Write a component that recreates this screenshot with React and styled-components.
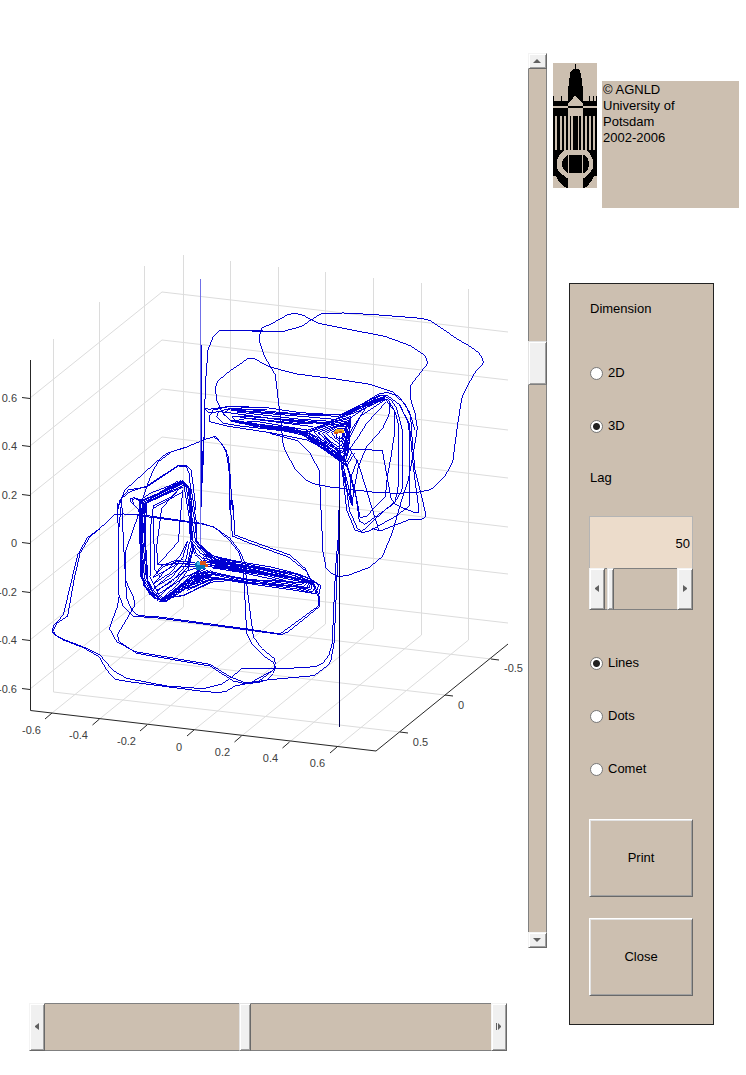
import React, { useState } from "react";
import styled, { createGlobalStyle, css } from "styled-components";

const clay = "#ccbfb0";

const GlobalStyle = createGlobalStyle`
  *, *::before, *::after { box-sizing: border-box; }
  body {
    margin: 0;
    background: #fff;
    color: #000;
    font-family: "Liberation Sans", Arial, sans-serif;
    font-size: 13px;
    line-height: 16px;
  }
`;

const Page = styled.main`
  display: flex;
  align-items: flex-start;
  padding: 53px 7px 24px 0;
`;

const Viewer = styled.section`
  flex: 1;
  min-width: 0;
  margin-right: 6px;
`;

const Stage = styled.div`
  display: flex;
`;

const PlotArea = styled.div`
  flex: 1;
  min-width: 0;
  padding: 187px 0 168px;
`;

const Plot = styled.svg`
  display: block;
  width: 100%;
  height: auto;
  overflow: visible;
  font-size: 11px;
`;

const Sidebar = styled.aside`
  flex: none;
  width: 186px;
  padding-top: 10px;
`;

/* Scroll bars */

const raised = css`
  border: 1px solid;
  border-color: #f4f4f4 #696969 #696969 #f4f4f4;
  box-shadow: inset 1px 1px #fff, inset -1px -1px #a0a0a0;
  background: #f0f0f0;
`;

const thumb = css`
  appearance: none;
  border-radius: 0;
  ${raised}
  border-color: #e3e3e3 #696969 #808080 #e3e3e3;
  width: ${(p) => (p.$vertical ? "19px" : `${p.$thumb}px`)};
  height: ${(p) => (p.$vertical ? `${p.$thumb}px` : "100%")};
`;

const Bar = styled.div`
  display: flex;
  flex-direction: ${(p) => (p.$vertical ? "column" : "row")};
  background: ${clay};
  ${(p) => p.$vertical && "width: 19px;"}
`;

const BottomBar = styled.div`
  margin: 55px 40px 0 29px;
`;

const Range = styled.input`
  appearance: none;
  display: block;
  flex: 1;
  min-width: 0;
  min-height: 0;
  margin: 0;
  background: ${clay};
  ${(p) =>
    p.$vertical
      ? "writing-mode: vertical-lr; width: 19px; box-shadow: inset 1px 0 #808080, inset -1px 0 #808080;"
      : `height: ${p.$size}px; box-shadow: inset 0 1px #808080, inset 0 -1px #808080;`}

  &::-webkit-slider-runnable-track { ${(p) => (p.$vertical ? "width: 100%;" : "height: 100%;")} }
  &::-webkit-slider-thumb { ${thumb} }
`;

const ArrowButton = styled.button`
  ${raised}
  flex: none;
  display: flex;
  align-items: center;
  justify-content: center;
  padding: 0;
  width: ${(p) => (p.$vertical ? "19px" : "16px")};
  height: ${(p) => (p.$vertical ? "16px" : "auto")};
`;

const arrows = {
  up: "M0 7L4 3L8 7Z",
  down: "M0 3H8L4 7Z",
  left: "M7 1V8L3 5V4Z",
  right: "M3 1V8L7 5V4Z",
  end: "M2 1H3V8H2ZM4 1L7 4V5L4 8Z",
};

function Arrow({ kind }) {
  return (
    <svg width="10" height="10" viewBox="0 0 10 10" aria-hidden="true">
      <path d={arrows[kind]} fill="#606060" />
    </svg>
  );
}

function ScrollBar({ label, vertical, size, thumbSize, initial, first, last }) {
  const [value, setValue] = useState(initial);
  const step = (d) => setValue((v) => Math.min(1000, Math.max(0, v + d)));
  return (
    <Bar $vertical={vertical}>
      <ArrowButton type="button" $vertical={vertical} aria-label={`${label} decrease`} onClick={() => step(-10)}>
        <Arrow kind={first} />
      </ArrowButton>
      <Range
        type="range"
        min="0"
        max="1000"
        aria-label={label}
        value={value}
        onChange={(e) => setValue(Number(e.target.value))}
        $vertical={vertical}
        $size={size}
        $thumb={thumbSize}
      />
      <ArrowButton type="button" $vertical={vertical} aria-label={`${label} increase`} onClick={() => step(10)}>
        <Arrow kind={last} />
      </ArrowButton>
    </Bar>
  );
}

/* Credits */

const Credits = styled.header`
  display: flex;
  align-items: flex-start;
  gap: 5px;
  margin-bottom: 75px;
`;

const Logo = styled.svg`
  flex: none;
  width: 44px;
  height: 125px;
  background: ${clay};
`;

const Notice = styled.p`
  flex: 1;
  min-height: 127px;
  margin: 18px 0 0;
  padding: 1px 60px 0 1px;
  background: ${clay};
`;

function TowerLogo() {
  return (
    <Logo viewBox="99 69 132 375" shapeRendering="crispEdges" role="img" aria-label="University of Potsdam tower">
      <path d="M165 72H168V87H174L180 93L183 102L186 126L189 150V183H231V198H99V183H144V150L147 126L150 102L153 93L159 87H165Z" />
      <path d="M99 168H102V183H99ZM123 168H126V183H123ZM207 168H210V183H207ZM219 168H222V183H219ZM228 168H231V183H228Z" />
      <path d="M166 166L189 192V198H144V192Z" fill={clay} />
      <path d="M144 198H189V204H144ZM99 204H144V228H99ZM189 204H231V228H189Z" />
      <path d="M99 228H105V330H99ZM111 228H120V330H111ZM126 228H132V330H126ZM138 228H143V330H138ZM150 228H153V330H150ZM159 228H174V330H159ZM177 228H183V330H177ZM189 228H195V330H189ZM201 228H207V330H201ZM213 228H219V330H213ZM225 228H231V330H225Z" />
      <path d="M99 330H231V408H99Z" />
      <path d="M135 330H198L210 342L219 360V384L210 399L195 411H138L120 399L111 384V360L120 342Z" fill={clay} />
      <path d="M141 345H192L204 357L208 372L204 387L192 399H141L129 387L125 372L129 357Z" />
      <path d="M144 345H147V399H144ZM186 345H189V399H186Z" fill={clay} />
      <path d="M108 408H132L144 416V444L132 441L114 420ZM222 408H201L189 416V444L201 441L216 420Z" />
      <path d="M144 399H189V444H144Z" fill={clay} />
    </Logo>
  );
}

/* Control panel */

const Panel = styled.form`
  display: flex;
  flex-direction: column;
  width: 145px;
  margin-left: 16px;
  padding: 17px 20px 28px 19px;
  background: ${clay};
  border: 1px solid #222;
`;

const Group = styled.fieldset`
  display: flex;
  flex-direction: column;
  gap: 37px;
  min-width: 0;
  margin: 0;
  padding: 0;
  border: 0;
`;

const Legend = styled.legend`
  padding: 0 0 48px 1px;
`;

const RadioLabel = styled.label`
  display: flex;
  align-items: center;
  gap: 5px;
  padding-left: 1px;
`;

const Radio = styled.input`
  appearance: none;
  width: 13px;
  height: 13px;
  margin: 0;
  border: 1px solid #777;
  border-radius: 50%;
  background: #fff;

  &:checked {
    background: radial-gradient(circle, #222 3px, #fff 4px);
  }
`;

const LagBlock = styled.div`
  display: flex;
  flex-direction: column;
  margin: 36px 0 45px;
`;

const LagLabel = styled.label`
  padding: 0 0 30px 1px;
`;

const LagInput = styled.input`
  width: 100%;
  height: 52px;
  padding: 2px 2px 0;
  border: 1px solid #b4b4b4;
  border-bottom: 0;
  background: #ecdccb;
  font: inherit;
  text-align: right;
`;

const Actions = styled.div`
  display: flex;
  flex-direction: column;
  gap: 21px;
  margin-top: 42px;
`;

const PushButton = styled.button`
  height: 78px;
  padding: 0;
  border: 1px solid;
  border-color: #fff #696969 #696969 #fff;
  box-shadow: inset 1px 1px #e3e3e3, inset -1px -1px #a0a0a0;
  background: ${clay};
  color: #000;
  font: inherit;
`;

function RadioGroup({ name, legend, options, initial }) {
  const [value, setValue] = useState(initial);
  return (
    <Group aria-label={legend ? undefined : name}>
      {legend && <Legend>{legend}</Legend>}
      {options.map((option) => (
        <RadioLabel key={option}>
          <Radio type="radio" name={name} checked={value === option} onChange={() => setValue(option)} />
          {option}
        </RadioLabel>
      ))}
    </Group>
  );
}

/* Phase space plot */

const zLevels = [
  [398, 292, 332, "0.6"],
  [446, 340, 380, "0.4"],
  [495, 389, 430, "0.2"],
  [543, 437, 478, "0"],
  [592, 486, 527, "-0.2"],
  [640, 534, 574, "-0.4"],
  [689, 583, 623, "-0.6"],
];

// wall x, wall top, wall bottom, axis x, axis y, label, label centre, baseline
const xLines = [
  [183.5, 255, 607, 52, 713, "-0.6", 31.5, 734],
  [230.5, 261, 613, 99.5, 719, "-0.4", 78.5, 739],
  [278.5, 267, 617, 147, 725, "-0.2", 126.5, 745],
  [325.5, 272, 624, 194, 730, "0", 179, 751],
  [373.5, 278, 629, 241.5, 736, "0.2", 222.5, 756],
  [421.5, 283, 635, 289.5, 742, "0.4", 270.5, 762],
  [468.5, 289, 640, 337, 747, "0.6", 317.5, 767],
];

const yLines = [
  [53.5, 339, 692, 400, 732, "0.5", 420.5, 746],
  [99.5, 302, 655, 445, 695, "0", 461, 709],
  [144.5, 266, 618, 491, 659, "-0.5", 513.5, 672],
];

// A sheaf of n curves blended from polyline a to polyline b, each one
// swaying a little so that neighbours cross as real orbits do.
function sheaf(a, b, n, sway = 0, close = "") {
  const from = a.split(" ").map(Number);
  const to = b.split(" ").map(Number);
  let d = "";
  for (let i = 0; i < n; i += 1) {
    const t = i / (n - 1);
    const points = from.map((v, k) => Math.round(v + (to[k] - v) * t + sway * Math.sin(i * 5 + k * 2.3)));
    d += `M${points.join(" ")}${close}`;
  }
  return d;
}

// Orbits are drawn in thirds of a unit from the origin of each patch.
const patches = [
  {
    x: 0,
    y: 240,
    paths: [
      "M604 715L607 655L612 600L614 500L618 410L624 330L640 290L660 271L850 274",
      "M606 730L611 640L614 500",
      "M665 515L650 480L646 445L652 425L680 400L745 355L762 355L792 372L810 381L890 402L1000 416L1105 432L1180 456",
      "M665 515L690 540L760 558",
      "M697 810L690 700L685 650L665 610L645 589L610 600L555 623L500 640L470 665L375 750L355 800",
      "M690 810L687 690L678 630L655 600L640 590",
      "M440 740L460 690L475 665L515 635L555 622",
      "M415 815L440 740",
      "M355 800L365 775L390 755L440 738L535 676L560 678L573 690L580 740L588 810",
      "M353 810L360 780L385 750L440 741L535 678L558 679L568 700L572 760L576 810",
      "M613 503L625 508L690 499L800 503L900 518L1020 525L1140 465",
      "M613 503L625 518L660 515L700 520L850 540L960 550L1010 555",
      "M690 499L640 510L627 530L630 545L680 558L810 578L920 600L1000 640L1040 680",
      "M760 503L690 505L655 515L650 530L670 550L720 558L900 578L1000 620L1035 665",
      "M800 510L690 507L668 520L690 540L760 558L920 582L1010 640",
      "M950 545L720 528L695 530L712 548L800 563L930 580L1020 650",
      "M940 560L740 535L712 541L760 556L920 575",
      "M920 570L780 546L742 546L800 560L930 580",
      sheaf("690 502 900 520 1020 527 1080 495 1150 468", "720 530 900 550 980 550 1060 520 1155 475", 6, 3),
      sheaf("730 545 890 568 930 585 975 620 1030 655", "690 545 880 574 920 588 970 625 1038 680", 5, 4),
      sheaf("900 578 990 547 1052 532 1046 600 1036 672 960 620", "1008 578 1018 568 1030 568 1030 584 1022 598 1010 592", 9, 2, "Z"),
      sheaf("920 590 1000 640 1040 680 1060 640", "960 580 1000 610 1030 640 1045 600", 5, 5),
    ],
  },
  {
    x: 250,
    y: 240,
    paths: [
      "M0 273L100 274L155 259L183 240L215 220L280 219L360 223L515 235L540 242L580 268L620 296L660 319L687 339L697 355L700 369L675 398L650 442L635 475L622 560L608 667L585 708L550 743L535 751L500 757L440 760L375 757L240 741L190 731L167 719L135 686L115 650L100 618L92 540L76 405L42 346L28 303L28 288L35 265L70 248L115 223L138 220L160 226L205 250L300 269L405 289L480 317L525 347L534 369L481 437L481 475L495 520L502 565L490 640L475 720L452 790L428 875L397 950L358 982L295 1006L265 1010L242 998L228 983L219 935L213 810L208 692L180 640L145 603L60 580",
      "M285 610L310 560L350 500L405 470",
      "M290 640L325 590L350 550L400 495L410 485",
      "M285 570L300 535L390 475",
      "M295 625L300 590L330 530L405 480",
    ],
  },
  {
    x: 280,
    y: 380,
    paths: [
      "M190 105L300 40L325 38L345 45L375 72L392 110L398 200L405 270L420 330L437 400L435 412L425 418L385 420L300 453L275 445",
      "M340 36L365 60L388 95L405 150",
      "M190 108L300 48L320 45L360 75L385 130L390 180L388 378L345 410L270 452L248 458L225 450L200 390L190 300L183 245",
      "M200 105L318 50L335 62L350 85L368 155L366 330L343 370L255 433L238 423L228 350L210 290L195 240",
      "M300 55L325 60L345 95L357 140L354 325L345 365L315 390L245 455L232 445L208 390L190 250",
      "M310 50L345 95L345 150L333 230L322 290L316 350L258 410L240 412L225 330L200 250",
      "M210 208L307 211L333 355L345 372L370 385L405 398L415 398L416 385L400 260L388 130L358 75",
      "M328 70L327 105L308 145L260 200L235 260L220 340L217 378L205 320L190 260",
      "M190 200L210 208L235 250L297 453",
      "M185 250L195 310L215 375L210 300L232 240",
    ],
  },
  {
    x: 0,
    y: 500,
    paths: [
      "M1017 60L1014 120L1007 200L1000 350L997 430L987 465L970 488L948 500L850 506L727 505L690 535L665 552L610 566L500 558L380 535L340 512L300 465L265 447L230 433L190 418L170 407L160 395",
      "M1017 30L1017 100L1012 205L1006 350L1002 430L993 480L985 495L942 527L800 540L740 551L705 558L680 573L655 578L600 573L500 560L400 547L345 538L320 510L297 470L250 443L190 420L165 405L157 393",
      "M157 400L157 388L162 375L190 345L215 240L233 165L262 113L300 85L345 43L370 42L420 44L605 70L645 83L690 123L715 155L728 190L733 260L740 400L755 430L790 467L820 487L826 500L820 520L800 540L750 551",
      "M160 393L170 370L203 348L222 240L240 160L270 110L300 86",
      "M410 46L605 72L640 80L690 115L720 155L735 190L742 270L760 410L785 445L822 475L826 490L820 510L750 549",
      "M352 10L355 100L357 285L370 320L400 350L460 352L750 391L845 404L865 395L958 320L960 300L955 280L915 205L870 165L750 122L705 105L698 0",
      "M365 0L370 120L380 295L395 330L415 347L470 350L750 388L840 402L955 318L955 290L920 215L865 171L750 130L697 108L690 0",
      "M358 285L352 320L328 385L350 425L405 455L630 493L690 530L735 548L775 545L820 510",
      "M415 45L378 150L376 240L400 290L405 315L352 405L358 425L410 460L630 498L700 543L735 551L790 545",
      "M352 20L365 0M365 0L357 80L357 285",
      sheaf("600 130 640 165 700 185 810 202 900 220 940 240 960 260 955 283 900 270 750 252 640 238 560 270", "615 195 660 200 740 210 810 222 870 235 895 242 905 245 895 250 850 245 750 238 640 215 590 225", 9, 3),
      sheaf("585 120 640 180 760 203 870 225 950 245", "640 205 720 220 800 232 870 246 935 248", 8, 3),
      "M700 238L640 240L555 285L510 293L485 300",
      "M720 240L640 245L540 290L510 290",
    ],
  },
  {
    x: 100,
    y: 430,
    paths: [
      "M118 215L105 203L93 205L93 215L118 240L130 230L125 212Z",
      "M118 240L100 222L98 208L112 205L132 220",
      "M235 180L185 235L170 350L173 405L235 335L248 180",
      "M173 405L250 400L290 405M160 440L190 410L250 388",
      "M240 155L150 190L118 212L120 320L130 465L150 490",
      "M235 152L175 190L138 218L128 320",
      "M250 185L158 236L165 420L180 440",
      "M118 240L122 440L150 495",
      "M245 170L215 200L160 228L152 290L150 440L180 500",
      sheaf("245 152 175 190 122 214 120 300 126 440 150 492 185 516 240 480 300 440 345 430", "248 170 190 196 138 222 134 330 145 450 165 485 190 506 235 470 280 430 310 412", 6, 2),
      sheaf("240 150 255 165 266 260 268 330 285 370 330 410 420 425", "248 158 274 180 286 280 292 335 330 370 370 395 420 395", 7, 3),
      sheaf("262 330 245 375 205 420 155 445", "282 345 270 415 230 470 180 508", 6, 4),
      sheaf("285 395 230 390 185 410 155 445", "300 430 260 450 215 490 185 512", 6, 4),
      sheaf("130 460 165 504 190 510 260 460 320 425", "145 480 175 514 200 512 270 470 330 440", 4, 2),
    ],
  },
];

function PhasePlot() {
  return (
    <Plot viewBox="0 240 528 540" role="img" aria-label="Three-dimensional phase space plot">
      <g fill="none" stroke="#dcdcdc">
        {zLevels.map(([a, b, c, label]) => (
          <path key={label} d={`M30 ${a}L162 ${b}L508 ${c}`} />
        ))}
        {xLines.map(([x, top, bottom, ax, ay]) => (
          <path key={x} d={`M${x} ${top}V${bottom}L${ax} ${ay}`} />
        ))}
        {yLines.map(([x, top, bottom, ax, ay]) => (
          <path key={x} d={`M${x} ${top}V${bottom}L${ax} ${ay}`} />
        ))}
      </g>
      <g fill="none" stroke="#262626">
        <path d="M30.5 360V710.5L376 751L508 644" />
        {zLevels.map(([a, , , label]) => (
          <path key={label} d={`M30 ${a + 0.5}L22 ${a - 0.5}`} />
        ))}
        {xLines.map(([x, , , ax, ay]) => (
          <path key={x} d={`M${ax} ${ay}l-7 6`} />
        ))}
        {yLines.map(([x, , , ax, ay]) => (
          <path key={x} d={`M${ax} ${ay}l8 1`} />
        ))}
      </g>
      <g fill="none" stroke="#0000d2" strokeWidth="3" shapeRendering="crispEdges">
        {patches.map((patch) => (
          <g key={`${patch.x}-${patch.y}`} transform={`translate(${patch.x} ${patch.y}) scale(0.33333)`}>
            {patch.paths.map((d) => (
              <path key={d} d={d} />
            ))}
          </g>
        ))}
      </g>
      <path d="M200.5 279V545" stroke="#7070e8" />
      <path d="M201.5 345V507" stroke="#0000d2" />
      <path d="M339.5 436V500" stroke="#0000d2" />
      <path d="M339.5 500V727" stroke="#000050" />
      <g shapeRendering="crispEdges">
        <path d="M195 563L198 561L204 564L206 569L196 570Z" fill="#0072bd" />
        <path d="M197 562H201V565H197Z" fill="#4dbeee" />
        <path d="M200 561H206V564H208V567H205V565H200Z" fill="#d95319" />
        <path d="M334 434V431L337 429H342L344 431V433H337Z" fill="#edb120" />
        <path d="M334 432H338V434H334ZM339 431H342V433H339Z" fill="#d95319" />
      </g>
      <g fill="#404040">
        {zLevels.map(([a, , , label]) => (
          <text key={label} x="17" y={a + 4} textAnchor="end">{label}</text>
        ))}
        {xLines.map(([x, , , , , label, lx, ly]) => (
          <text key={x} x={lx} y={ly} textAnchor="middle">{label}</text>
        ))}
        {yLines.map(([x, , , , , label, lx, ly]) => (
          <text key={x} x={lx} y={ly} textAnchor="middle">{label}</text>
        ))}
      </g>
    </Plot>
  );
}

export default function App() {
  const [lag, setLag] = useState("50");
  return (
    <>
      <GlobalStyle />
      <Page>
        <Viewer>
          <Stage>
            <PlotArea>
              <PhasePlot />
            </PlotArea>
            <ScrollBar label="Elevation" vertical thumbSize={44} initial={332} first="up" last="down" />
          </Stage>
          <BottomBar>
            <ScrollBar label="Azimuth" size={48} thumbSize={12} initial={448} first="left" last="end" />
          </BottomBar>
        </Viewer>
        <Sidebar>
          <Credits>
            <TowerLogo />
            <Notice>© AGNLD University of Potsdam 2002-2006</Notice>
          </Credits>
          <Panel onSubmit={(e) => e.preventDefault()}>
            <RadioGroup name="dimension" legend="Dimension" options={["2D", "3D"]} initial="3D" />
            <LagBlock>
              <LagLabel htmlFor="lag">Lag</LagLabel>
              <LagInput id="lag" type="text" value={lag} onChange={(e) => setLag(e.target.value)} />
              <ScrollBar label="Lag slider" size={42} thumbSize={7} initial={30} first="left" last="right" />
            </LagBlock>
            <RadioGroup name="style" options={["Lines", "Dots", "Comet"]} initial="Lines" />
            <Actions>
              <PushButton type="button">Print</PushButton>
              <PushButton type="button">Close</PushButton>
            </Actions>
          </Panel>
        </Sidebar>
      </Page>
    </>
  );
}
